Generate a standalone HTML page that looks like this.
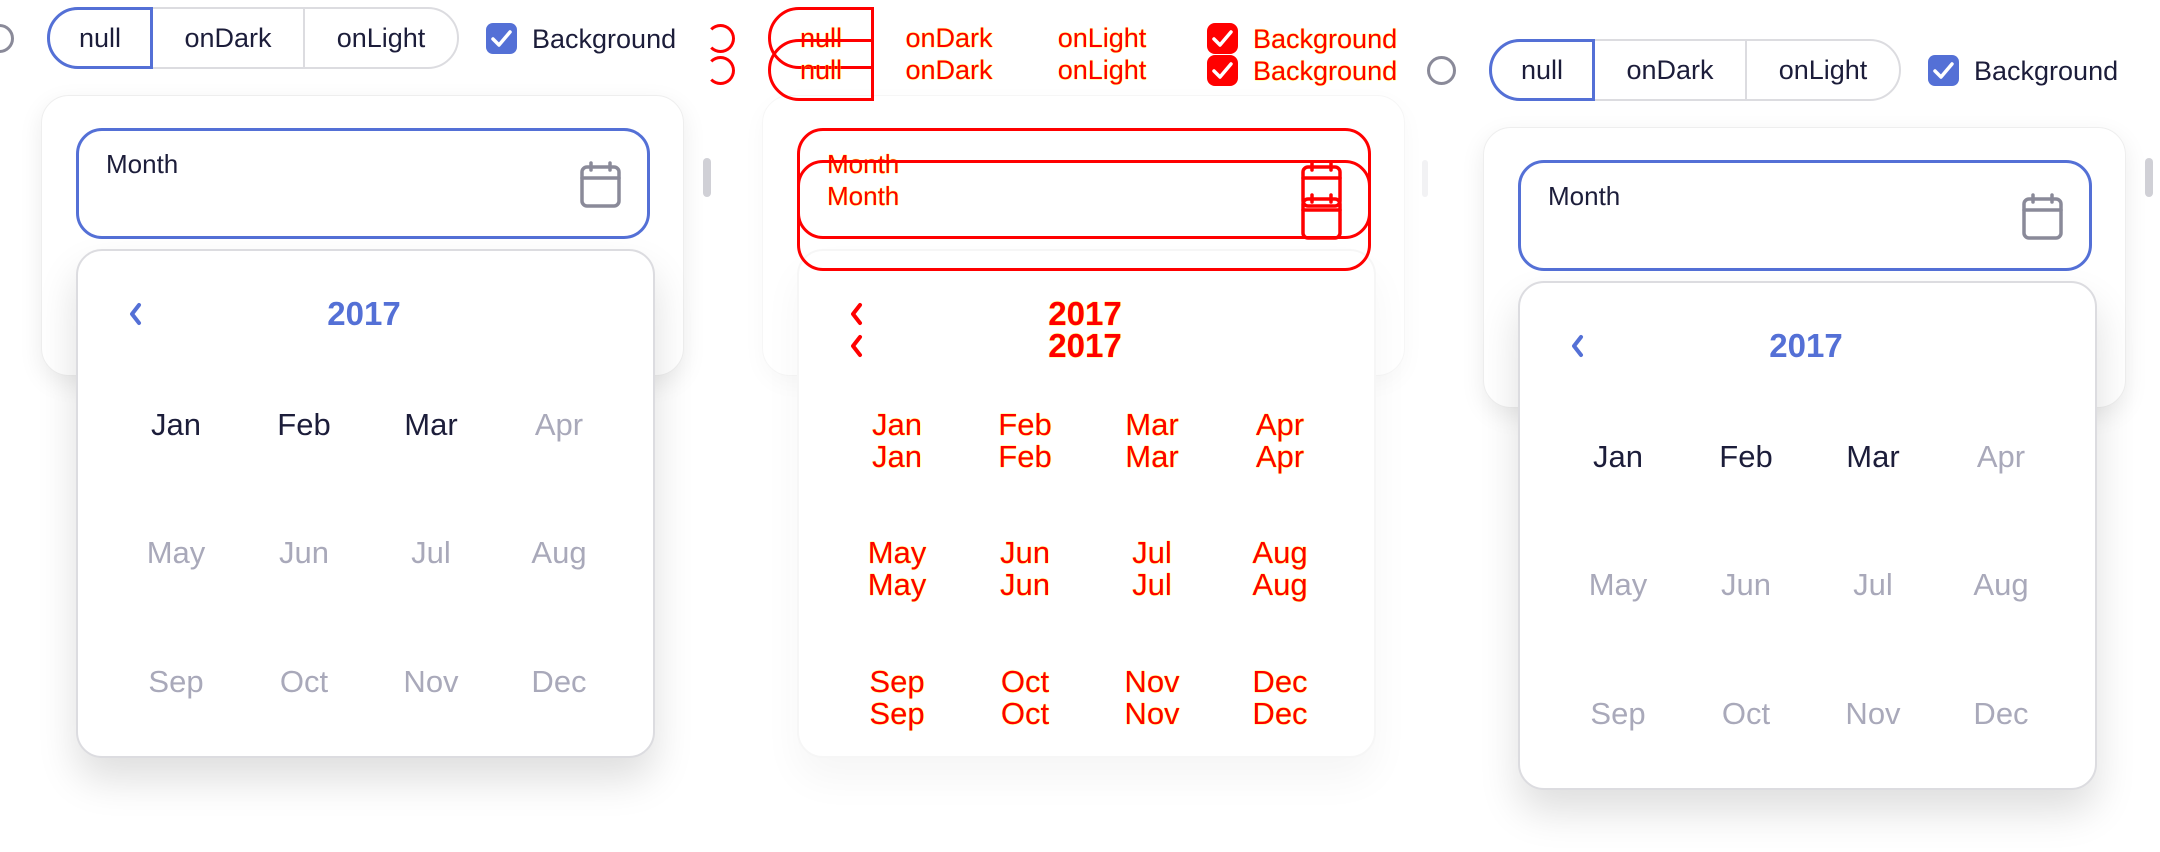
<!DOCTYPE html>
<html><head><meta charset="utf-8"><style>
*{box-sizing:border-box;margin:0;padding:0}
body{width:2160px;height:820px;background:#fff;position:relative;overflow:hidden;font-family:"Liberation Sans",sans-serif;color:#1c1d3a}
.p{position:absolute;left:0;top:0;width:720px;height:820px}
.a{position:absolute}
.radio{left:-15px;top:24px;width:29px;height:29px;border:3px solid #8a8a99;border-radius:50%}
.seg{left:47px;top:7px;width:412px;height:62px;border:2px solid #dcdce0;border-radius:31px}
.nullb{left:47px;top:7px;width:106px;height:62px;border:3px solid #5470d6;border-radius:31px 0 0 31px}
.div{top:9px;width:2px;height:58px;background:#dcdce0}
.t{font-size:27px;line-height:32px;white-space:nowrap;transform:translateX(-50%)}
.cb{left:486px;top:23px;width:31px;height:31px;border-radius:7px;background:#5470d6}
.card{left:41px;top:95px;width:643px;height:281px;border:1px solid #eee;border-radius:28px;box-shadow:0 8px 24px rgba(0,0,0,.08);background:#fff}
.inp{left:76px;top:128px;width:574px;height:111px;border:3px solid #5470d6;border-radius:26px}
.sb{left:703px;top:158px;width:8px;height:39px;background:#d0d0d6;border-radius:4px}
.dd{left:76px;top:249px;width:579px;height:509px;border:2px solid #dcdce0;border-radius:26px;background:#fff;box-shadow:0 22px 40px rgba(0,0,0,.13)}
.m{font-size:31px;line-height:36px;transform:translate(-50%,-50%);white-space:nowrap}
.g{color:#a9a9ba}
.yr{font-size:33px;font-weight:bold;color:#5470d6;transform:translate(-50%,-50%)}
.r .a{background:transparent!important;box-shadow:none!important}
.r .seg,.r .div{border-color:transparent}
.r .div{background:transparent!important}
.r .card,.r .dd{border-color:transparent}
.r .nullb,.r .inp{border-color:#f00}
.r .radio{border-color:#f00;border-left-color:transparent}
.r .cb{background:#f00!important;border-radius:8px}
.r .t,.r .m,.r .yr{color:#f00!important;text-shadow:0 0 1px #ff0,0 0 1px #ff0}
.r .sb{display:none}
#p4 .sb{display:none}
</style></head><body>

<div class="p" id="p1" style="left:0;top:0"></div>
<div class="p" id="p2b" style="left:721px;top:0">
  <div class="a card" style="border-color:#f6f6f6;box-shadow:0 8px 24px rgba(0,0,0,.03)"></div>
  <div class="a dd" style="border-color:#f6f6f6;box-shadow:0 22px 40px rgba(0,0,0,.04)"></div>
</div>
<div class="p r" id="p2" style="left:721px;top:0"></div>
<div class="p r" id="p3" style="left:721px;top:32px"></div>
<div class="p" id="p4" style="left:1442px;top:32px"></div>
<div class="a" style="left:1422px;top:160px;width:6px;height:37px;background:#f2f2f4;border-radius:3px"></div>
<div class="a" style="left:2145px;top:158px;width:8px;height:39px;background:#d0d0d6;border-radius:4px"></div>

<template id="tp">
  <div class="a radio"></div>
  <div class="a seg"></div>
  <div class="a div" style="left:303px"></div>
  <div class="a nullb"></div>
  <div class="a t" style="left:100px;top:22px">null</div>
  <div class="a t" style="left:228px;top:22px">onDark</div>
  <div class="a t" style="left:381px;top:22px">onLight</div>
  <div class="a cb"><svg width="31" height="31" viewBox="0 0 31 31"><path d="M7 16l6 6 11-13" fill="none" stroke="#fff" stroke-width="3.5" stroke-linecap="round" stroke-linejoin="round"/></svg></div>
  <div class="a t" style="left:532px;top:23px;transform:none">Background</div>
  <div class="a card"></div>
  <div class="a inp"></div>
  <div class="a t" style="left:106px;top:148px;transform:none;font-size:26px">Month</div>
  <svg class="a cal" style="left:578px;top:161px" width="46" height="48" viewBox="0 0 46 48"><g fill="none" stroke="#8a8a99" stroke-width="3.5" stroke-linecap="round"><rect x="4" y="6" width="37" height="39" rx="5"/><path d="M4 17h37M13 2v7M32 2v7"/></g></svg>
  <div class="a sb"></div>
  <div class="a dd"></div>
  <svg class="a chev" style="left:127px;top:301px" width="18" height="26" viewBox="0 0 18 26"><path d="M12 4L5 13l7 9" fill="none" stroke="#5470d6" stroke-width="4" stroke-linecap="round" stroke-linejoin="round"/></svg>
  <div class="a yr" style="left:364px;top:314px">2017</div>
  <div class="a m" style="left:176px;top:425px">Jan</div>
  <div class="a m" style="left:304px;top:425px">Feb</div>
  <div class="a m" style="left:431px;top:425px">Mar</div>
  <div class="a m g" style="left:559px;top:425px">Apr</div>
  <div class="a m g" style="left:176px;top:553px">May</div>
  <div class="a m g" style="left:304px;top:553px">Jun</div>
  <div class="a m g" style="left:431px;top:553px">Jul</div>
  <div class="a m g" style="left:559px;top:553px">Aug</div>
  <div class="a m g" style="left:176px;top:682px">Sep</div>
  <div class="a m g" style="left:304px;top:682px">Oct</div>
  <div class="a m g" style="left:431px;top:682px">Nov</div>
  <div class="a m g" style="left:559px;top:682px">Dec</div>
</template>
<script>
var tp=document.getElementById('tp').innerHTML;
['p1','p2','p3','p4'].forEach(function(id){document.getElementById(id).innerHTML=tp;});
['p2','p3'].forEach(function(id){
  var e=document.getElementById(id);
  e.querySelectorAll('.cal g').forEach(function(x){x.setAttribute('stroke','#f00')});
  e.querySelectorAll('.chev path').forEach(function(x){x.setAttribute('stroke','#f00')});
});
</script>
</body></html>
